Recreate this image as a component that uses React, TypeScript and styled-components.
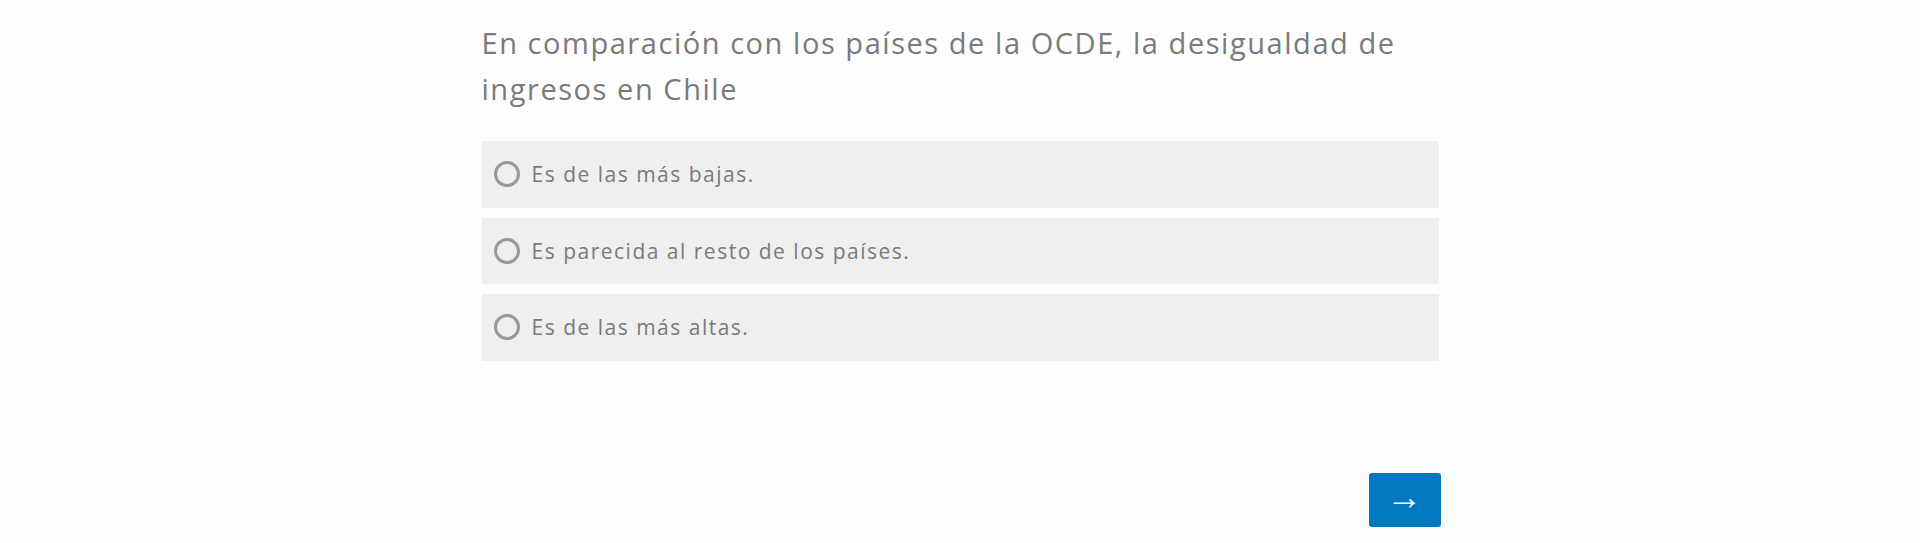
import React, { useState } from "react";
import styled, { createGlobalStyle } from "styled-components";

const GlobalStyle = createGlobalStyle`
  html, body {
    margin: 0;
    padding: 0;
    background: #fdfdfd;
  }
  body {
    font-family: "Open Sans", "Noto Sans", sans-serif;
  }
`;

const Page = styled.main`
  width: 100%;
  min-height: 543px;
  background: #fdfdfd;
`;

const Container = styled.section`
  width: 957px;
  margin: 0 auto;
  padding-top: 20px;
  display: flex;
  flex-direction: column;
`;

const Question = styled.h2`
  margin: 0 0 29px 0;
  font-family: "Open Sans", sans-serif;
  font-weight: 400;
  font-size: 29px;
  line-height: 46px;
  color: #7a7a7a;
  letter-spacing: 1.55px;
`;

const Options = styled.div`
  display: flex;
  flex-direction: column;
  gap: 10px;
`;

const Option = styled.label`
  display: flex;
  align-items: center;
  gap: 12px;
  height: 66.5px;
  padding: 0 12px;
  box-sizing: border-box;
  background: #efefef;
  cursor: pointer;
`;

const Radio = styled.span<{ $checked: boolean }>`
  width: 26px;
  height: 26px;
  box-sizing: border-box;
  border-radius: 50%;
  border: 3px solid #999999;
  background: ${(p) => (p.$checked ? "#999" : "transparent")};
  flex: none;
`;

const OptionText = styled.span`
  font-family: "Open Sans", sans-serif;
  font-weight: 400;
  font-size: 21px;
  letter-spacing: 1.5px;
  color: #7a7a7a;
`;

const Footer = styled.div`
  display: flex;
  justify-content: flex-end;
  margin-top: 112px;
`;

const NextButton = styled.button`
  width: 72px;
  height: 54px;
  margin-right: -2px;
  padding: 0 0 5px 0;
  border: none;
  border-radius: 3px;
  background: #0079c2;
  color: #ffffff;
  font-family: "Liberation Sans", sans-serif;
  font-size: 36px;
  line-height: 1;
  display: flex;
  align-items: center;
  justify-content: center;
  cursor: pointer;
`;

const options = [
  "Es de las más bajas.",
  "Es parecida al resto de los países.",
  "Es de las más altas.",
];

export default function App() {
  const [selected, setSelected] = useState<number | null>(null);
  return (
    <Page>
      <GlobalStyle />
      <Container>
        <Question>
          En comparación con los países de la OCDE, la desigualdad de ingresos en Chile
        </Question>
        <Options>
          {options.map((o, i) => (
            <Option key={o} onClick={() => setSelected(i)}>
              <Radio $checked={selected === i} />
              <OptionText>{o}</OptionText>
            </Option>
          ))}
        </Options>
        <Footer>
          <NextButton aria-label="Siguiente">→</NextButton>
        </Footer>
      </Container>
    </Page>
  );
}
